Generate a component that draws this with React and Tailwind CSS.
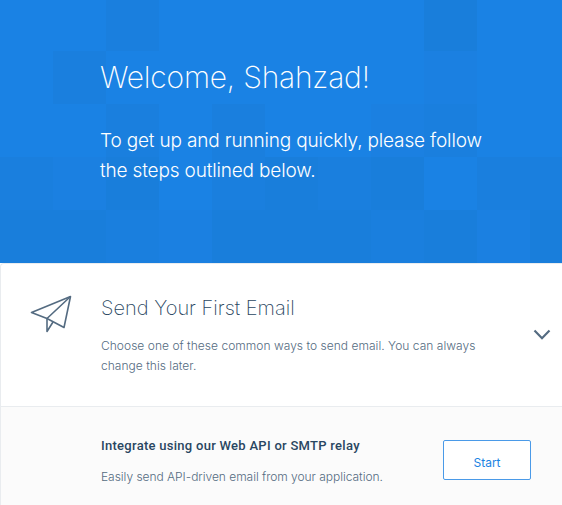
import React, { useState } from 'react';

// 0 = base blue, 1 = slightly darker, 2 = mid, 3 = darkest
const tiles = [
  [0, 0, 2, 0, 0, 0, 0, 0, 3, 0, 0],
  [0, 2, 0, 0, 0, 0, 0, 0, 1, 0, 0],
  [0, 0, 2, 0, 2, 0, 0, 1, 2, 0, 0],
  [2, 1, 3, 0, 2, 3, 2, 3, 0, 2, 2],
  [3, 3, 2, 1, 3, 3, 3, 2, 3, 1, 3],
];

const tileColors = ['bg-[#1a82e4]', 'bg-[#1b80e1]', 'bg-[#1a7fde]', 'bg-[#197edb]'];

function Mosaic() {
  return (
    <div className="absolute -top-0.5 left-0 grid grid-cols-[repeat(11,53px)] auto-rows-[53px]">
      {tiles.flat().map((t, i) => (
        <div key={i} className={tileColors[t]} />
      ))}
    </div>
  );
}

function PaperPlane() {
  return (
    <svg className="w-[42px] h-[38px] text-[#546b81]" viewBox="0 0 42 38" fill="none" stroke="currentColor" strokeWidth="1.6" strokeLinejoin="round">
      <path d="M1.5 17.5 40.5 1.5 34 32.5 17 23.5Z" />
      <path d="M40.5 1.5 17 23.5V36.5L23 27" />
    </svg>
  );
}

export default function App() {
  const [open, setOpen] = useState(true);

  return (
    <div className="w-[562px] h-[505px] overflow-hidden bg-white font-['Inter','Liberation_Sans',sans-serif]">
      <header className="relative h-[263px] overflow-hidden bg-[#1a82e4] text-white">
        <Mosaic />
        <div className="relative pl-[100px] pt-[57px]">
          <h1 className="text-[30px] leading-10 font-extralight whitespace-nowrap tracking-[-0.2px]">Welcome, Shahzad!</h1>
          <p className="mt-[29px] text-[19px] leading-[30px] font-light whitespace-nowrap tracking-[-0.16px]">
            To get up and running quickly, please follow
            <br />
            the steps outlined below.
          </p>
        </div>
      </header>

      <main className="border-l border-t border-[#e9ecef] rounded-tl-sm">
        <section className="flex h-[143px] items-start border-b border-[#e9ecef] pl-[29px] pt-[30px]">
          <div className="pt-px">
            <PaperPlane />
          </div>
          <div className="ml-[29px] w-[420px]">
            <h2 className="text-[20px] leading-7 font-extralight text-[#294661] whitespace-nowrap">Send Your First Email</h2>
            <p className="mt-3.5 text-[12px] leading-5 font-light text-[#546b81] tracking-[0.03px] whitespace-nowrap">
              Choose one of these common ways to send email. You can always
              <br />
              change this later.
            </p>
          </div>
          <button className="mt-[35px] ml-3" aria-label="Toggle" onClick={() => setOpen(!open)}>
            <svg className="w-[18px] h-3 text-[#546b81]" viewBox="0 0 18 12" fill="none" stroke="currentColor" strokeWidth="2.2">
              <path d="M1.5 1.5 9 9.2 16.5 1.5" />
            </svg>
          </button>
        </section>

        {open && (
          <section className="flex h-[98px] bg-[#fbfbfb] pl-[100px]">
            <div className="w-[342px] pt-[29px]">
              <h3 className="text-[13px] leading-5 font-medium text-[#294661] tracking-[0.28px] whitespace-nowrap font-['Roboto',sans-serif]">Integrate using our Web API or SMTP relay</h3>
              <p className="mt-[11px] text-[12px] leading-5 font-light text-[#546b81] tracking-[-0.03px] whitespace-nowrap">Easily send API-driven email from your application.</p>
            </div>
            <button className="mt-[33px] h-10 w-[88px] rounded-[2px] border border-[#4a9ae8] bg-white pt-1.5 text-[12px] text-[#1a82e2]">Start</button>
          </section>
        )}
      </main>
    </div>
  );
}
